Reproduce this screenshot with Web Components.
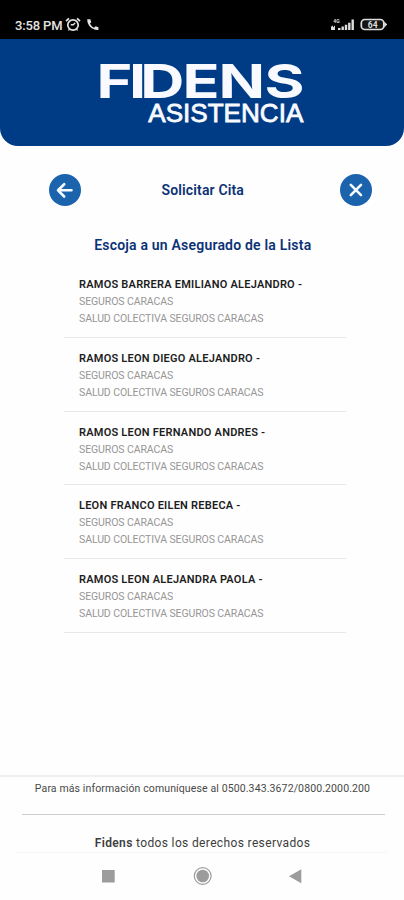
<!DOCTYPE html>
<html lang="es">
<head>
<meta charset="utf-8">
<title>Fidens Asistencia</title>
<style>
html,body{margin:0;height:100%}
body{font-family:Roboto,"Liberation Sans",sans-serif;background:#fefefe;overflow:hidden}
</style>
</head>
<body>
<fidens-app></fidens-app>
<script>
const define=(name,html,setup)=>customElements.define(name,class extends HTMLElement{
  connectedCallback(){
    if(this.shadowRoot)return;
    this.attachShadow({mode:'open'}).innerHTML=html;
    if(setup)setup(this,this.shadowRoot);
  }
});

define('status-bar',`<style>
:host{display:flex;box-sizing:border-box;height:39px;padding:10px 17px 0 15px;background:#000;color:#e4e4e4;justify-content:space-between;align-items:flex-start}
div{display:flex;height:29px;align-items:flex-start}
span{font:500 13px/31px Roboto,sans-serif;letter-spacing:-.15px}
svg{display:block}
</style>
<div><span>3:58 PM</span>
<svg width="16" height="29" viewBox="0 0 16 29" style="margin-left:3px" fill="none" stroke="#e4e4e4"><circle cx="8" cy="15" r="5.2" stroke-width="1.7"/><path d="M1 11.2 4 8.4M15 11.2 12 8.4" stroke-width="1.8"/><path d="M5.8 14.7H8.2L10.2 13" stroke-width="1.4"/><path d="m4.5 19-1 1.5M11.5 19l1 1.5" stroke-width="1.3"/></svg>
<svg width="12" height="29" viewBox="0 0 12 29" style="margin-left:6px" fill="#e4e4e4"><path d="M.3 9.300h3l1 3-1.400 1.300c1 2 2.200 3.200 4.200 4.200l1.400-1.600 2.900 1v2.700C5.500 20.600-.2 15 .3 9.300z"/></svg></div>
<div>
<svg width="56" height="29" viewBox="0 0 56 29"><g fill="#dedede"><path d="M0 20v-3.200l2-1.400v2.200l2-2v4.400zM7 20v-2h2.500v2zM10.500 20v-3.500h2.400V20zM13.800 20v-5.300h2.400V20zM17.100 20v-7.300h2.400V20zM20.500 20V9.500h2.400V20z"/><text x="2.300" y="12.700" font-family="Roboto,sans-serif" font-weight="700" font-size="5">4G</text><path d="M53.200 11.500l3 3-3 3z"/></g><rect x="30.300" y="9.500" width="22.500" height="10" rx="3.500" fill="#141414" stroke="#dedede" stroke-width="1.700"/><text x="36.800" y="17.800" font-family="Roboto,sans-serif" font-weight="700" font-size="8.500" fill="#dedede">64</text></svg>
</div>`);

define('brand-header',`<style>
:host{display:block;height:107px;background:#003c85;border-radius:0 0 18px 18px}
svg{display:block}
text{fill:#f8faff}
</style>
<svg width="404" height="107" viewBox="0 0 404 107">
<text transform="scale(1.3 1)" x="74.300 99.300 107.900 140.400 168 203.400" y="59.500" font-family="Inter,sans-serif" font-weight="650" font-size="47">FIDENS</text>
<text x="148.300" y="83.300" font-family="Liberation Sans,sans-serif" font-size="25.500" stroke="#f8faff" stroke-width=".8" textLength="155" lengthAdjust="spacingAndGlyphs">ASISTENCIA</text>
</svg>`);

define('round-button',`<style>
:host{display:block;width:32px;height:32px;border-radius:50%;background:#1c63ae}
svg{display:block}
path{fill:none;stroke:#f7fbff;stroke-width:2.600;stroke-linecap:round;stroke-linejoin:round}
</style><svg width="32" height="32" viewBox="0 0 32 32"><path/></svg>`,(h,r)=>{
  r.querySelector('path').setAttribute('d',h.getAttribute('icon')==='back'?'M22.500 16.300H9.500M15.200 10.200 9 16.300l6.200 6.200':'M10.800 10.900l10.200 10.200M21 10.900 10.800 21.100');
});

define('page-toolbar',`<style>
:host{display:flex;justify-content:space-between;align-items:center;padding:28px 32px 0 48.500px;height:32px}
h1{margin:0 15px 0 0;font-size:14px;font-weight:600;line-height:32px;color:#0c3276;letter-spacing:.15px}
</style><round-button icon="back"></round-button><h1><slot></slot></h1><round-button icon="close"></round-button>`);

define('insured-item',`<style>
:host{display:block;box-sizing:border-box;height:73.750px;margin:0 58px 0 64px;padding:12px 0 0 15px;border-bottom:1px solid #e8e8e8;white-space:nowrap}
b,span{display:block;height:17px;line-height:17px}
b{font-size:11px;font-weight:600;color:#1d1d1d;letter-spacing:.23px}
span{font-size:10.500px;color:#969696;letter-spacing:-.1px}
</style><b><slot></slot></b><span>SEGUROS CARACAS</span><span>SALUD COLECTIVA SEGUROS CARACAS</span>`);

define('app-footer',`<style>
:host{display:block;height:77px;border-top:2px solid #f0f0f0;text-align:center;box-sizing:border-box;color:#3d3d3d;white-space:nowrap}
p{margin:0}
.info{font-size:10.500px;line-height:20px;padding:2px 0 0 1px;height:35px;letter-spacing:.12px;color:#484848}
hr{margin:0 19px 0 22px;border:0;height:1px;background:#cfcfcf}
.rights{font-size:12px;line-height:20px;padding-top:18px;height:20px;letter-spacing:.36px}
.rights span{margin-left:1px}
b{font-weight:600}
</style><p class="info"><span>Para más información comuníquese al 0500.343.3672/0800.2000.200</span></p><hr><p class="rights"><span><b>Fidens</b> todos los derechos reservados</span></p>`);

define('nav-bar',`<style>
:host{display:block;height:48px;box-sizing:border-box}
svg{display:block}
</style><svg width="404" height="48" viewBox="0 0 404 48"><path d="M16 .5H388" stroke="#f7f7f7"/><g fill="#9c9c9c"><path d="M102 18h12.700v12.500H102zM289 24.200l12.300-7v14z"/><circle cx="202.700" cy="24" r="6.300"/></g><circle cx="202.700" cy="24" r="8.400" fill="none" stroke="#9c9c9c" stroke-width="1.200"/></svg>`);

define('fidens-app',`<style>
:host{display:flex;flex-direction:column;width:404px;height:900px}
h2{margin:0;text-align:center;font-size:14px;font-weight:600;line-height:20px;color:#0c3276;padding:29px 0 0 1.500px;height:20px;letter-spacing:.2px}
main{flex:1;padding-top:9px}
</style>
<status-bar></status-bar><brand-header></brand-header>
<page-toolbar>Solicitar Cita</page-toolbar>
<h2><span>Escoja a un Asegurado de la Lista</span></h2>
<main>
<insured-item>RAMOS BARRERA EMILIANO ALEJANDRO -</insured-item>
<insured-item>RAMOS LEON DIEGO ALEJANDRO -</insured-item>
<insured-item>RAMOS LEON FERNANDO ANDRES -</insured-item>
<insured-item>LEON FRANCO EILEN REBECA -</insured-item>
<insured-item>RAMOS LEON ALEJANDRA PAOLA -</insured-item>
</main>
<app-footer></app-footer><nav-bar></nav-bar>`);
</script>
</body>
</html>
